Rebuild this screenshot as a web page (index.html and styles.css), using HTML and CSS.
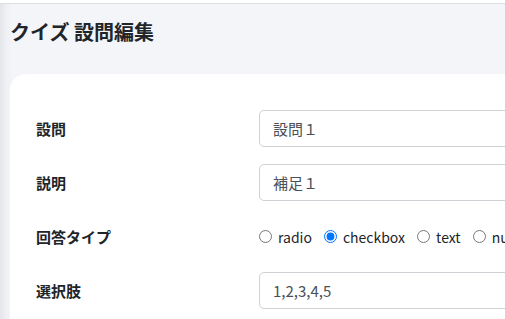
FILE: index.html
```html
<!DOCTYPE html>
<html lang="ja">
<head>
  <meta charset="UTF-8">
  <meta name="viewport" content="width=device-width, initial-scale=1.0">
  <title>クイズ 設問編集</title>
  <link rel="stylesheet" href="styles.css">
</head>
<body>
  <div class="page">
    <header class="page-header">
      <h1>クイズ 設問編集</h1>
    </header>
    <div class="card">
      <form class="question-form">
        <div class="form-row">
          <label class="form-label" for="question">設問</label>
          <input class="form-input" id="question" type="text" value="設問１">
        </div>
        <div class="form-row">
          <label class="form-label" for="description">説明</label>
          <input class="form-input" id="description" type="text" value="補足１">
        </div>
        <div class="form-row">
          <span class="form-label">回答タイプ</span>
          <div class="radio-group">
            <label class="radio-item"><input type="radio" name="answer-type" value="radio">radio</label>
            <label class="radio-item"><input type="radio" name="answer-type" value="checkbox" checked>checkbox</label>
            <label class="radio-item"><input type="radio" name="answer-type" value="text">text</label>
            <label class="radio-item"><input type="radio" name="answer-type" value="number">number</label>
          </div>
        </div>
        <div class="form-row">
          <label class="form-label" for="choices">選択肢</label>
          <input class="form-input" id="choices" type="text" value="1,2,3,4,5">
        </div>
      </form>
    </div>
  </div>
</body>
</html>
```

FILE: styles.css
```css
* {
  box-sizing: border-box;
}
body {
  margin: 0;
  font-family: "Noto Sans CJK JP", "Noto Sans", sans-serif;
  color: #212529;
  background: #fff;
  overflow: hidden;
}
.page {
  margin-top: 3px;
  border-top: 1px solid #dcdde0;
  min-height: 316px;
  background: linear-gradient(to right, #e4e5e9 0, #eff0f4 6px, #f4f5f9 12px);
}
.page-header {
  height: 70px;
  padding: 16px 10px 0;
}
.page-header h1 {
  margin: 0;
  font-size: 20px;
  font-weight: 700;
  line-height: 24px;
}
.card {
  margin-left: 10px;
  width: 720px;
  min-height: 260px;
  background: #fff;
  border-radius: 16px 0 0 0;
  padding: 36px 0 0 26px;
}
.question-form {
  display: flex;
  flex-direction: column;
  gap: 17px;
}
.form-row {
  display: grid;
  grid-template-columns: 223px 1fr;
  align-items: center;
  height: 37px;
}
.form-label {
  font-size: 15px;
  font-weight: 700;
}
.form-input {
  height: 37px;
  width: 100%;
  padding: 0 13px;
  border: 1px solid #ced1d6;
  border-radius: 5px;
  font-family: inherit;
  font-size: 15px;
  color: #495057;
  background: #fff;
}
.radio-group {
  display: flex;
  align-items: center;
  gap: 12px;
  font-size: 14px;
  color: #212529;
  white-space: nowrap;
}
.radio-item {
  display: inline-flex;
  align-items: center;
  gap: 6px;
}
.radio-item input {
  margin: 0;
  width: 13px;
  height: 13px;
}
```
